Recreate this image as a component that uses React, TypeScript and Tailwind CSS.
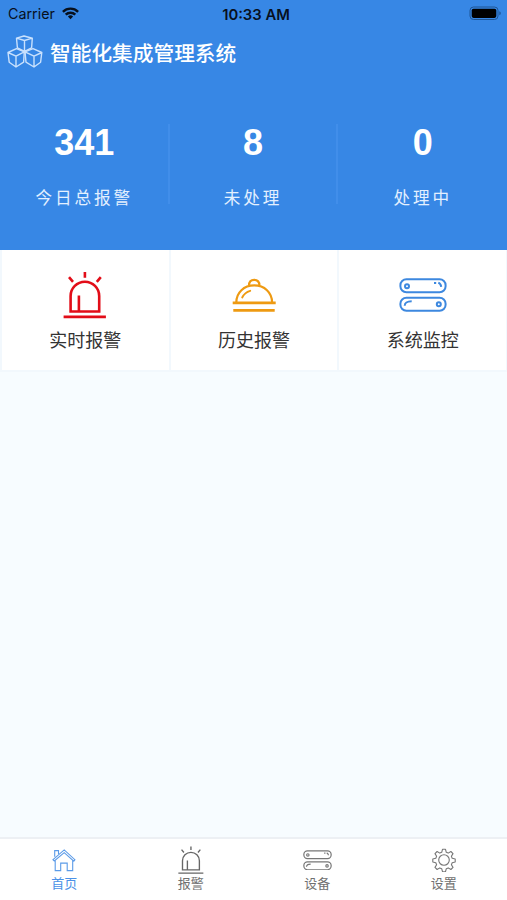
import type { ReactNode } from "react"

function LogoIcon() {
  return (
    <svg width="36" height="34" viewBox="0 0 36 34" fill="none" stroke="#c9e1fd" strokeWidth="1.4" strokeLinejoin="round">
      <path d="M9.5 3.2 17 1l8.3 2.2-.7 9.6-7 3.6-7.2-3.6zM9.5 3.2l8 2.3 7.8-2.3M17.5 5.5v10.9" />
      <path d="m1 17.5 8.5-3.8 7.8 3.2-.7 10.3L9 32l-6.8-4.8zM1 17.5l8 3.7 8.3-4.3M9 21.2V32" />
      <path d="m18 16.9 8-3.2 8.8 3.8-1.2 9.7L27 32l-8-4.8zM18 16.9l9 4.3 7.8-3.7M27 21.2V32" />
    </svg>
  )
}

function WifiIcon() {
  return (
    <svg width="17" height="13" viewBox="0 0 17 13" fill="none" stroke="#07101d" strokeWidth="2.4">
      <path d="M.9 4.8a10.8 10.8 0 0 1 15.2 0M3.7 7.7a6.8 6.8 0 0 1 9.6 0" />
      <path d="M8.5 12.2 5.9 9.6a3.7 3.7 0 0 1 5.2 0z" fill="#07101d" stroke="none" />
    </svg>
  )
}

function BatteryIcon() {
  return (
    <svg width="33" height="15" viewBox="0 0 33 15">
      <rect x="1" y="1" width="28" height="12.5" rx="3.5" fill="none" stroke="#1f5594" />
      <rect x="2.7" y="2.7" width="24.6" height="9.2" rx="1.8" fill="#000" />
      <path d="M30.3 5.2c2 .7 2 3.4 0 4.1z" fill="#1f5594" />
    </svg>
  )
}

function AlarmIcon({ width, stroke, color }: { width: number; stroke: number; color: string }) {
  return (
    <svg width={width} height={(width * 48) / 44} viewBox="0 0 44 48" fill="none" stroke={color} strokeWidth={stroke}>
      <path d="M7.6 40.5V25a14.3 14.3 0 0 1 28.6 0v15.5zM15.9 24.5v16" />
      <path d="M.6 45.9h42.3M21.9 1v5.7M6 6.2l4 4.7M37.800 6.200l-4 4.700" />
    </svg>
  )
}

function BellIcon() {
  return (
    <svg width="44" height="36" viewBox="0 0 44 36" fill="none" stroke="#ee9a12" strokeWidth="2.2">
      <path d="M4.3 25.5C4.3 15.5 12 8.4 22.2 8.4s17.9 7.1 17.9 17.1" />
      <path d="M17 8.5C17 5 18.7 2.8 22.2 2.8s5.2 2.2 5.2 5.7" />
      <path d="M.7 25.9h43M1.3 33.4h41.4" strokeWidth="2.6" />
      <path d="M10.2 20.5c1.7-3.6 4.3-5.6 8-6.7" strokeLinecap="round" strokeWidth="1.9" />
    </svg>
  )
}

function ServerIcon({ width, stroke, color }: { width: number; stroke: number; color: string }) {
  return (
    <svg width={width} height={(width * 34) / 48} viewBox="0 0 48 34" fill="none" stroke={color} strokeWidth={stroke}>
      <rect x="1.4" y="1.3" width="45.2" height="13" rx="6" />
      <rect x="1.4" y="19.7" width="45.2" height="13" rx="6" />
      <circle cx="8" cy="8.2" r="2" />
      <circle cx="39.8" cy="26.3" r="2" />
      <path d="M35 5.1h2.2M39.3 4.7c1.8.8 2.7 2 2.9 4.1M5.7 27.8c.2-3 1.6-4.4 7-4.5" />
    </svg>
  )
}

function HomeIcon() {
  return (
    <svg width="24" height="24" viewBox="0 0 24 24" fill="none" stroke="#5b9be8" strokeWidth="1.1">
      <path d="M1 11.7 12.2 1.9l10.7 9.8-1.1 1.4-9.6-8.4L2.3 13zM2.7 8.8V2.6h3.8v3.3" />
      <path d="M3.2 12.4v10.2h5.5v-7.5h6.5v7.5h5.5V12.2" />
    </svg>
  )
}

function GearIcon() {
  return (
    <svg width="24" height="24" viewBox="0 0 24 24" fill="none" stroke="#777" strokeWidth="1.1" strokeLinejoin="round">
      <circle cx="12" cy="12" r="5.3" />
      <path d="M10.5 1.3h3l.8 3 1.9.8 2.7-1.6 2.1 2.1-1.6 2.7.8 1.9 3 .8v3l-3 .8-.8 1.9 1.6 2.7-2.1 2.1-2.7-1.6-1.9.8-.8 3h-3l-.8-3-1.9-.8-2.7 1.6L3 19.4l1.6-2.7-.8-1.9-3-.8v-3l3-.8.8-1.9L3 5.6l2.1-2.1 2.7 1.6 1.9-.8z" />
    </svg>
  )
}

const stats = [
  { value: "341", label: "今日总报警" },
  { value: "8", label: "未处理" },
  { value: "0", label: "处理中" },
]

function MenuCard({ icon, label }: { icon: ReactNode; label: string }) {
  return (
    <div className="bg-white">
      <div className="flex h-[74px] items-center justify-center pt-4">{icon}</div>
      <p className="text-center text-[18px] leading-[34px] text-[#333]">{label}</p>
    </div>
  )
}

function Tab({ icon, label, active }: { icon: ReactNode; label: string; active?: boolean }) {
  return (
    <div className="flex flex-1 flex-col items-center pt-[7px]">
      <div className="flex h-7 items-center">{icon}</div>
      <span className={`text-[13px] leading-[20px] ${active ? "text-[#4b91e7]" : "text-[#707070]"}`}>{label}</span>
    </div>
  )
}

export default function App() {
  return (
    <div className="flex h-[900px] w-[507px] flex-col overflow-hidden bg-[#f7fcff] font-['Liberation_Sans','Noto_Sans_CJK_SC',sans-serif]">
      <header className="h-[250px] bg-[#3787e5] text-white">
        <div className="grid h-[27px] grid-cols-3 items-center pr-[5px] pl-[8px] font-['Inter',sans-serif] text-[#07101d]">
          <div className="flex items-center gap-[7px]">
            <span className="text-[14.3px]">Carrier</span>
            <WifiIcon />
          </div>
          <span className="pt-[2px] pl-[2px] text-center text-[14.8px] leading-5 font-semibold whitespace-nowrap">10:33 AM</span>
          <div className="flex justify-end">
            <BatteryIcon />
          </div>
        </div>

        <div className="flex h-[50px] items-center gap-[7px] pl-[7px]">
          <LogoIcon />
          <h1 className="pt-[3px] text-[20.7px] font-medium">智能化集成管理系统</h1>
        </div>

        <div className="grid grid-cols-3 pt-[47px] pl-px">
          {stats.map((s, i) => (
            <div
              key={s.label}
              className={`h-[80px] text-center ${i < 2 ? "border-r-2 border-[#418eea]" : ""}`}
            >
              <p className="text-[36px] leading-[38px] font-bold">{s.value}</p>
              <p className="mt-[24px] text-[16.6px] leading-[26px] tracking-[2.9px] text-[#e3f0ff]">{s.label}</p>
            </div>
          ))}
        </div>
      </header>

      <div className="grid h-[122px] grid-cols-3 gap-[2px] bg-[#f2f8fd] pr-px pb-[2px] pl-[2px]">
        <MenuCard icon={<AlarmIcon width={44} stroke={2.6} color="#e20d18" />} label="实时报警" />
        <MenuCard icon={<BellIcon />} label="历史报警" />
        <MenuCard icon={<ServerIcon width={48} stroke={2} color="#3d88df" />} label="系统监控" />
      </div>

      <main className="flex-1" />

      <nav className="flex h-[63px] border-t-2 border-[#edf0f4] bg-white pl-px">
        <Tab icon={<HomeIcon />} label="首页" active />
        <Tab icon={<AlarmIcon width={26} stroke={2.3} color="#666" />} label="报警" />
        <Tab icon={<ServerIcon width={29} stroke={2} color="#777" />} label="设备" />
        <Tab icon={<GearIcon />} label="设置" />
      </nav>
    </div>
  )
}
